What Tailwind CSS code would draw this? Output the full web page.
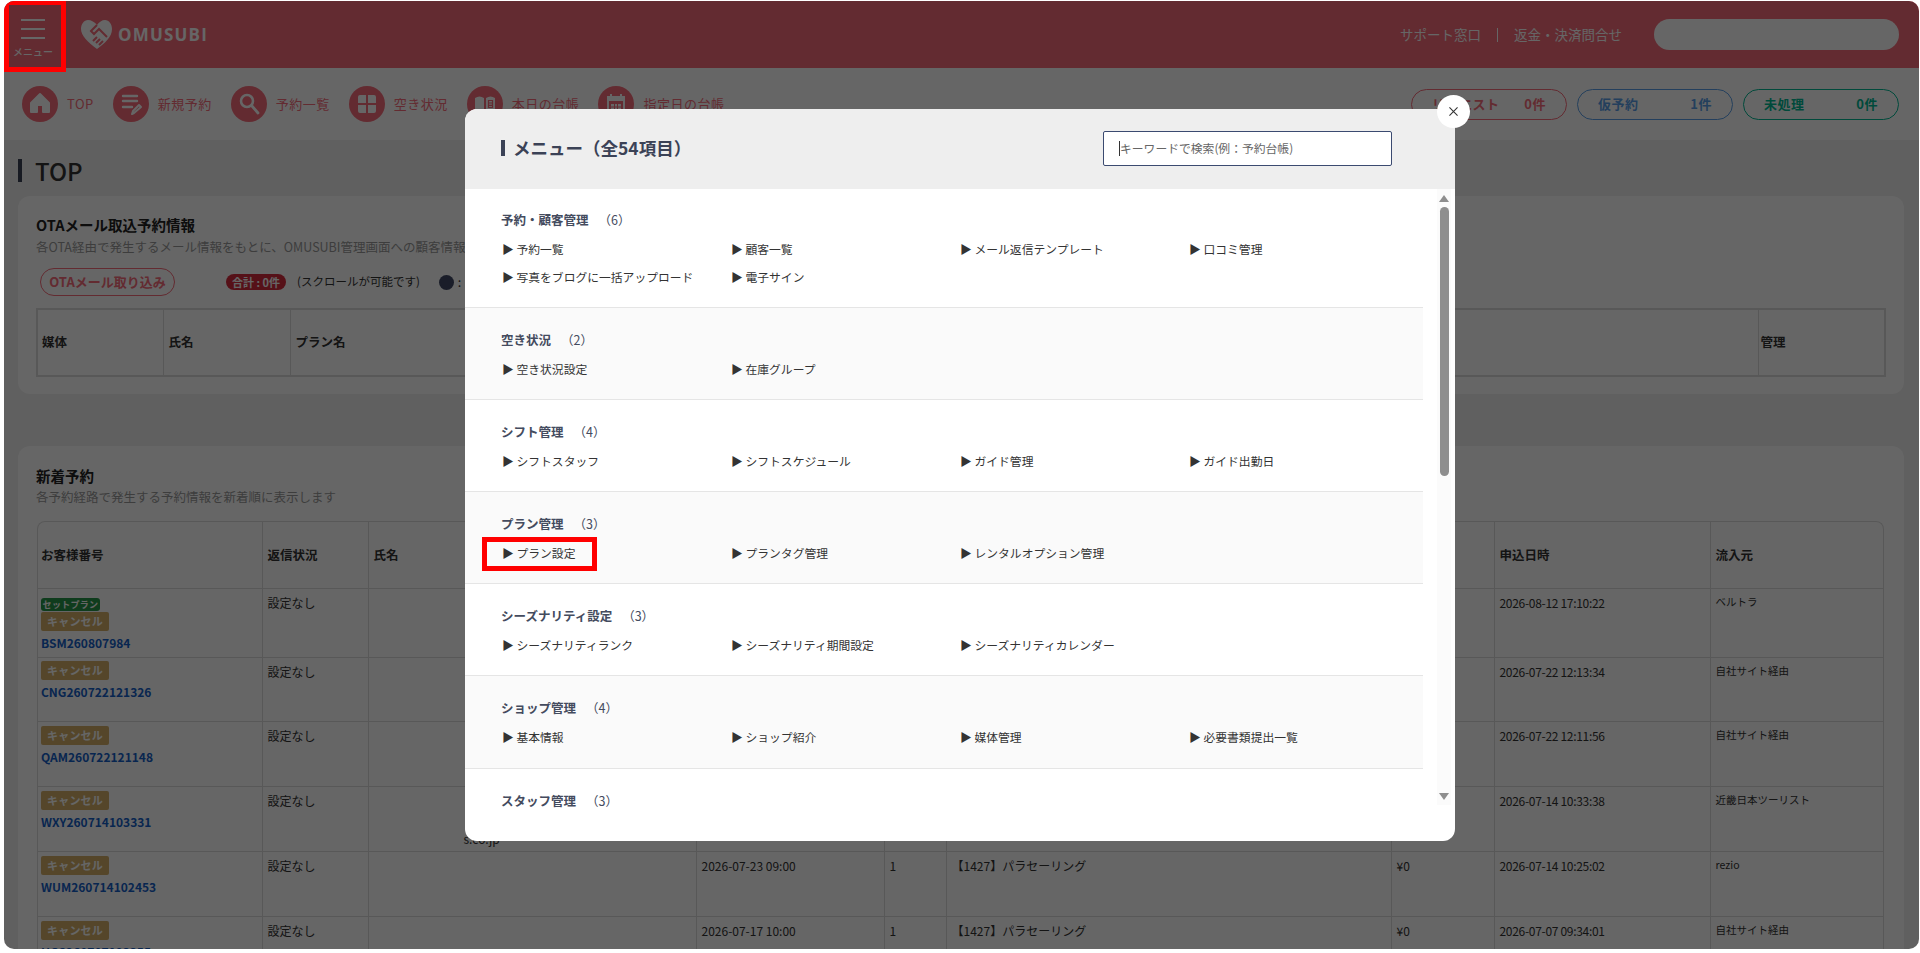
<!DOCTYPE html>
<html lang="ja">
<head>
  <meta charset="UTF-8" />
  <meta name="viewport" content="width=device-width, initial-scale=1" />
  <title>OMUSUBI メニュー</title>
  <script src="https://cdn.jsdelivr.net/npm/@tailwindcss/browser@4"></script>
</head>
<body class="bg-white font-['Noto_Sans_CJK_JP','Noto_Sans',sans-serif] text-[#333] h-[953px] overflow-hidden">
  <!-- Page frame -->
  <div class="relative mt-px ml-1 w-[1915px] h-[948px] rounded-[10px] overflow-hidden bg-[#f0f0f0]">

    <!-- Header -->
    <header class="h-[67px] bg-[#f76b7a] flex items-center">
      <div class="w-[58px] h-full flex flex-col items-center pt-[18px] text-white">
        <div class="w-6 flex flex-col gap-[7px]">
          <span class="block h-[2px] bg-white"></span>
          <span class="block h-[2px] bg-white"></span>
          <span class="block h-[2px] bg-white"></span>
        </div>
        <span class="mt-[6px] text-[10px] leading-[14px] font-medium whitespace-nowrap">メニュー</span>
      </div>
      <div class="ml-[19px] flex items-center">
        <svg viewBox="0 0 32 30" class="w-8 h-[30px] -mt-[2px]">
          <path fill="#fff" d="M7 1C3 1 0 5 0 10c0 7 7 13 16 20 8-6 15-12 15-20 0-5-3-9-7-9-3 0-6 2-8 5-2-3-6-5-9-5z" />
          <path fill="none" stroke="#f76b7a" stroke-width="2" d="M16 6l-6 6 3 3 5-5 8 8M13 15l-3-3M12 22l4-4M15 24l4-4M18 26l4-4" />
        </svg>
        <span class="ml-[5px] font-['Open_Sans',sans-serif] font-bold text-[17px] leading-none tracking-[1.2px] text-white">OMUSUBI</span>
      </div>
      <div class="ml-auto flex items-center text-[13.5px] text-white">
        <a>サポート窓口</a>
        <span class="mx-4 w-px h-[14px] bg-white"></span>
        <a>返金・決済問合せ</a>
        <div class="ml-[32px] mr-5 w-[245px] h-[31px] rounded-full bg-[#fff]"></div>
      </div>
    </header>

    <!-- Shortcut nav -->
    <nav class="h-[72px] bg-white flex items-center pl-[18px] pr-5 text-[#f76b7a]">
      <div class="flex items-center gap-[19px]">
        <a class="flex items-center gap-[9px]">
          <span class="w-9 h-9 rounded-full bg-[#f76b7a] block">
            <svg viewBox="0 0 36 36" class="w-9 h-9"><path fill="#fff" stroke="#fff" stroke-width="2" stroke-linejoin="round" d="M18 8l9 9v9h-6v-7h-6v7H9v-9z" /></svg>
          </span>
          <span class="text-[13px] tracking-[0.5px]">TOP</span>
        </a>
        <a class="flex items-center gap-[9px]">
          <span class="w-9 h-9 rounded-full bg-[#f76b7a] block">
            <svg viewBox="0 0 36 36" class="w-9 h-9"><path fill="none" stroke="#fff" stroke-width="2.4" stroke-linecap="round" d="M10 10h14M10 15h14M10 21h9" /><path fill="none" stroke="#fff" stroke-width="2" stroke-linejoin="round" d="M21 27l-2 1 1-3 6-6 2 2z" /></svg>
          </span>
          <span class="text-[13px] tracking-[0.5px]">新規予約</span>
        </a>
        <a class="flex items-center gap-[9px]">
          <span class="w-9 h-9 rounded-full bg-[#f76b7a] block">
            <svg viewBox="0 0 36 36" class="w-9 h-9"><circle cx="16" cy="15" r="6" fill="none" stroke="#fff" stroke-width="2.6" /><path stroke="#fff" stroke-width="2.8" stroke-linecap="round" d="M20.5 19.5L27 27" /></svg>
          </span>
          <span class="text-[13px] tracking-[0.5px]">予約一覧</span>
        </a>
        <a class="flex items-center gap-[9px]">
          <span class="w-9 h-9 rounded-full bg-[#f76b7a] block">
            <svg viewBox="0 0 36 36" class="w-9 h-9"><path fill="#fff" d="M11 9h6v8H9v-6a2 2 0 0 1 2-2zM19 9h6a2 2 0 0 1 2 2v6h-8zM9 19h8v8h-6a2 2 0 0 1-2-2zM19 19h8v6a2 2 0 0 1-2 2h-6z" /></svg>
          </span>
          <span class="text-[13px] tracking-[0.5px]">空き状況</span>
        </a>
        <a class="flex items-center gap-[9px]">
          <span class="w-9 h-9 rounded-full bg-[#f76b7a] block">
            <svg viewBox="0 0 36 36" class="w-9 h-9"><path fill="#fff" d="M8 12c3-2 6-2 9 0v15c-3-2-6-2-9 0zM19 12c3-2 6-2 9 0v15c-3-2-6-2-9 0z" /><path fill="none" stroke="#f76b7a" stroke-width="1.2" d="M21.5 14.5h4v7h-4zM21.5 17h4M21.5 19.3h4" /></svg>
          </span>
          <span class="text-[13px] tracking-[0.5px]">本日の台帳</span>
        </a>
        <a class="flex items-center gap-[9px]">
          <span class="w-9 h-9 rounded-full bg-[#f76b7a] block">
            <svg viewBox="0 0 36 36" class="w-9 h-9"><path fill="#fff" d="M9 10h3V8h2v2h8V8h2v2h3v18H9zM11 15v11h14V15z" /><path fill="#fff" d="M13 18h10v6H13z" /><path stroke="#f76b7a" d="M16.5 18v6M19.5 18v6M13 21h10" /></svg>
          </span>
          <span class="text-[13px] tracking-[0.5px]">指定日の台帳</span>
        </a>
      </div>
      <div class="ml-auto flex gap-[10px] text-[13px] font-bold tracking-[0.5px]">
        <a class="w-[156px] h-[31px] rounded-full border border-[#f76b7a] flex items-center justify-between px-5 text-[#f76b7a]"><span>リクエスト</span><span>0件</span></a>
        <a class="w-[156px] h-[31px] rounded-full border border-[#5a9fe8] flex items-center justify-between px-5 text-[#5a9fe8]"><span>仮予約</span><span>1件</span></a>
        <a class="w-[156px] h-[31px] rounded-full border border-[#00b894] flex items-center justify-between px-5 text-[#00b894]"><span>未処理</span><span>0件</span></a>
      </div>
    </nav>

    <!-- Main -->
    <main class="px-[14px]">
      <div class="h-[56px] flex items-center">
        <h1 class="pl-[13px] border-l-4 border-[#3b4256] h-[23px] mt-[5px] flex items-center text-[24px] font-medium text-[#333]">TOP</h1>
      </div>

      <!-- OTA mail card -->
      <section class="w-[1886px] h-[198px] bg-white rounded-xl pt-[19px] pl-[18px]">
        <h2 class="text-[14.5px] leading-5 font-bold text-[#222]">OTAメール取込予約情報</h2>
        <p class="mt-[3px] text-[12.5px] leading-[18px] text-[#999] whitespace-nowrap">各OTA経由で発生するメール情報をもとに、OMUSUBI管理画面への顧客情報</p>
        <div class="mt-3 flex items-center h-7">
          <button class="ml-[4px] w-[135px] h-7 rounded-full border border-[#f76b7a] text-[13px] font-bold text-[#f76b7a]">OTAメール取り込み</button>
          <span class="ml-[51px] w-[60px] h-4 rounded-full bg-[#d62b3e] text-white text-[11px] leading-4 font-bold text-center">合計 : 0件</span>
          <span class="ml-[11px] text-[11.5px]">(スクロールが可能です)</span>
          <span class="ml-[19px] w-[15px] h-[15px] rounded-full bg-[#414a66]"></span>
          <span class="ml-1 text-[12.5px]">:</span>
        </div>
        <div class="mt-3 w-[1850px] border-2 border-[#ddd]">
          <table class="w-full table-fixed border-collapse">
            <colgroup><col class="w-[125px]" /><col class="w-[127px]" /><col /><col class="w-[126px]" /></colgroup>
            <tr class="h-[65px] text-[12.5px] text-left font-bold">
              <th class="pl-[4px] border-r border-[#ddd]">媒体</th>
              <th class="pl-[5px] border-r border-[#ddd]">氏名</th>
              <th class="pl-[5px] border-r border-[#ddd]">プラン名</th>
              <th class="pl-[2px]">管理</th>
            </tr>
          </table>
        </div>
      </section>

      <!-- New reservations card -->
      <section class="mt-[52px] w-[1886px] h-[600px] bg-white rounded-xl pt-5 pl-[18px]">
        <h2 class="text-[14.5px] leading-5 font-bold text-[#222]">新着予約</h2>
        <p class="mt-[2px] text-[12.5px] leading-[18px] text-[#999]">各予約経路で発生する予約情報を新着順に表示します</p>
        <div class="mt-[15px] ml-px w-[1847px] rounded-t-lg overflow-hidden border-t border-l border-r border-[#ddd]">
          <table class="w-full table-fixed border-collapse text-[12px] leading-[18px]">
            <colgroup>
              <col class="w-[224px]" /><col class="w-[106px]" /><col class="w-[328px]" /><col class="w-[188px]" /><col class="w-[62px]" /><col class="w-[445px]" /><col class="w-[103px]" /><col class="w-[216px]" /><col />
            </colgroup>
            <thead>
              <tr class="h-[66px] text-left font-bold text-[12.5px]">
                <th class="pl-[3px] border-r border-b border-[#ddd]">お客様番号</th>
                <th class="pl-[5px] border-r border-b border-[#ddd]">返信状況</th>
                <th class="pl-[5px] border-r border-b border-[#ddd]">氏名</th>
                <th class="border-r border-b border-[#ddd]"></th>
                <th class="border-r border-b border-[#ddd]"></th>
                <th class="border-r border-b border-[#ddd]"></th>
                <th class="border-r border-b border-[#ddd]"></th>
                <th class="pl-[5px] border-r border-b border-[#ddd]">申込日時</th>
                <th class="pl-[5px] border-b border-[#ddd]">流入元</th>
              </tr>
            </thead>
            <tbody class="align-top">
              <tr class="h-[69px]">
                <td class="pl-[3px] pt-[9px] border-r border-b border-[#ddd]">
                  <span class="block w-[59px] h-[13px] rounded-[3px] bg-[#27964a] text-white text-[9px] leading-[13px] font-bold text-center whitespace-nowrap tracking-[0.3px]">セットプラン</span>
                  <span class="block mt-px w-[68px] h-[19px] rounded-[2px] bg-[#d4b06a] text-white text-[11px] leading-[19px] font-bold text-center tracking-[0.2px]">キャンセル</span>
                  <a class="block mt-[3px] text-[12px] font-bold text-[#1560c8]">BSM260807984</a>
                </td>
                <td class="pl-[5px] pt-[5px] border-r border-b border-[#ddd]">設定なし</td>
                <td class="border-r border-b border-[#ddd]"></td>
                <td class="border-r border-b border-[#ddd]"></td>
                <td class="border-r border-b border-[#ddd]"></td>
                <td class="border-r border-b border-[#ddd]"></td>
                <td class="border-r border-b border-[#ddd]"></td>
                <td class="pl-[5px] pt-[5px] border-r border-b border-[#ddd] tracking-[-0.3px]">2026-08-12 17:10:22</td>
                <td class="pl-[5px] pt-[4px] border-b border-[#ddd] text-[10.5px]">ベルトラ</td>
              </tr>
              <tr class="h-[64px]">
                <td class="pl-[3px] pt-[3px] border-r border-b border-[#ddd]">
                  <span class="block w-[68px] h-[19px] rounded-[2px] bg-[#d4b06a] text-white text-[11px] leading-[19px] font-bold text-center tracking-[0.2px]">キャンセル</span>
                  <a class="block mt-[3px] text-[12px] font-bold text-[#1560c8]">CNG260722121326</a>
                </td>
                <td class="pl-[5px] pt-[5px] border-r border-b border-[#ddd]">設定なし</td>
                <td class="border-r border-b border-[#ddd]"></td>
                <td class="border-r border-b border-[#ddd]"></td>
                <td class="border-r border-b border-[#ddd]"></td>
                <td class="border-r border-b border-[#ddd]"></td>
                <td class="border-r border-b border-[#ddd]"></td>
                <td class="pl-[5px] pt-[5px] border-r border-b border-[#ddd] tracking-[-0.3px]">2026-07-22 12:13:34</td>
                <td class="pl-[5px] pt-[4px] border-b border-[#ddd] text-[10.5px]">自社サイト経由</td>
              </tr>
              <tr class="h-[65px]">
                <td class="pl-[3px] pt-[4px] border-r border-b border-[#ddd]">
                  <span class="block w-[68px] h-[19px] rounded-[2px] bg-[#d4b06a] text-white text-[11px] leading-[19px] font-bold text-center tracking-[0.2px]">キャンセル</span>
                  <a class="block mt-[3px] text-[12px] font-bold text-[#1560c8]">QAM260722121148</a>
                </td>
                <td class="pl-[5px] pt-[5px] border-r border-b border-[#ddd]">設定なし</td>
                <td class="border-r border-b border-[#ddd]"></td>
                <td class="border-r border-b border-[#ddd]"></td>
                <td class="border-r border-b border-[#ddd]"></td>
                <td class="border-r border-b border-[#ddd]"></td>
                <td class="border-r border-b border-[#ddd]"></td>
                <td class="pl-[5px] pt-[5px] border-r border-b border-[#ddd] tracking-[-0.3px]">2026-07-22 12:11:56</td>
                <td class="pl-[5px] pt-[4px] border-b border-[#ddd] text-[10.5px]">自社サイト経由</td>
              </tr>
              <tr class="h-[65px]">
                <td class="pl-[3px] pt-[4px] border-r border-b border-[#ddd]">
                  <span class="block w-[68px] h-[19px] rounded-[2px] bg-[#d4b06a] text-white text-[11px] leading-[19px] font-bold text-center tracking-[0.2px]">キャンセル</span>
                  <a class="block mt-[3px] text-[12px] font-bold text-[#1560c8]">WXY260714103331</a>
                </td>
                <td class="pl-[5px] pt-[5px] border-r border-b border-[#ddd]">設定なし</td>
                <td class="pl-[95px] pt-[43px] border-r border-b border-[#ddd]">s.co.jp</td>
                <td class="border-r border-b border-[#ddd]"></td>
                <td class="border-r border-b border-[#ddd]"></td>
                <td class="border-r border-b border-[#ddd]"></td>
                <td class="border-r border-b border-[#ddd]"></td>
                <td class="pl-[5px] pt-[5px] border-r border-b border-[#ddd] tracking-[-0.3px]">2026-07-14 10:33:38</td>
                <td class="pl-[5px] pt-[4px] border-b border-[#ddd] text-[10.5px]">近畿日本ツーリスト</td>
              </tr>
              <tr class="h-[65px]">
                <td class="pl-[3px] pt-[4px] border-r border-b border-[#ddd]">
                  <span class="block w-[68px] h-[19px] rounded-[2px] bg-[#d4b06a] text-white text-[11px] leading-[19px] font-bold text-center tracking-[0.2px]">キャンセル</span>
                  <a class="block mt-[3px] text-[12px] font-bold text-[#1560c8]">WUM260714102453</a>
                </td>
                <td class="pl-[5px] pt-[5px] border-r border-b border-[#ddd]">設定なし</td>
                <td class="border-r border-b border-[#ddd]"></td>
                <td class="pl-[5px] pt-[5px] border-r border-b border-[#ddd]">2026-07-23 09:00</td>
                <td class="pl-[5px] pt-[5px] border-r border-b border-[#ddd]">1</td>
                <td class="pl-[5px] pt-[5px] border-r border-b border-[#ddd]">【1427】パラセーリング</td>
                <td class="pl-[5px] pt-[5px] border-r border-b border-[#ddd]">¥0</td>
                <td class="pl-[5px] pt-[5px] border-r border-b border-[#ddd] tracking-[-0.3px]">2026-07-14 10:25:02</td>
                <td class="pl-[5px] pt-[4px] border-b border-[#ddd] text-[10.5px]">rezio</td>
              </tr>
              <tr class="h-[65px]">
                <td class="pl-[3px] pt-[4px] border-r border-b border-[#ddd]">
                  <span class="block w-[68px] h-[19px] rounded-[2px] bg-[#d4b06a] text-white text-[11px] leading-[19px] font-bold text-center tracking-[0.2px]">キャンセル</span>
                  <a class="block mt-[3px] text-[12px] font-bold text-[#1560c8]">UGS260707093355</a>
                </td>
                <td class="pl-[5px] pt-[5px] border-r border-b border-[#ddd]">設定なし</td>
                <td class="border-r border-b border-[#ddd]"></td>
                <td class="pl-[5px] pt-[5px] border-r border-b border-[#ddd]">2026-07-17 10:00</td>
                <td class="pl-[5px] pt-[5px] border-r border-b border-[#ddd]">1</td>
                <td class="pl-[5px] pt-[5px] border-r border-b border-[#ddd]">【1427】パラセーリング</td>
                <td class="pl-[5px] pt-[5px] border-r border-b border-[#ddd]">¥0</td>
                <td class="pl-[5px] pt-[5px] border-r border-b border-[#ddd] tracking-[-0.3px]">2026-07-07 09:34:01</td>
                <td class="pl-[5px] pt-[4px] border-b border-[#ddd] text-[10.5px]">自社サイト経由</td>
              </tr>
            </tbody>
          </table>
        </div>
      </section>
    </main>

    <!-- Dim overlay -->
    <div class="absolute inset-0 bg-black/60"></div>

    <!-- Red highlight on the menu button -->
    <div class="absolute left-0 -top-px w-[62px] h-[72px] border-[5px] border-[#ff0000]"></div>

    <!-- Menu modal -->
    <div class="absolute left-[461px] top-[108px] w-[990px] h-[732px] bg-white rounded-xl">
      <div class="h-[80px] rounded-t-xl bg-[#eeeeee] flex items-center pl-[36px]">
        <h2 class="pl-[8px] border-l-[4px] border-[#3b4256] h-4 flex items-center text-[17.5px] font-bold text-[#3b4256] -mt-[2px]">メニュー（全54項目）</h2>
        <div class="ml-auto mr-[63px] w-[289px] h-[35px] -mt-[2px] rounded-[2px] border border-[#3b4a70] bg-white flex items-center pl-[15px]">
          <span class="w-px h-[15px] bg-[#333]"></span>
          <span class="text-[11.8px] text-[#666]">キーワードで検索(例：予約台帳)</span>
        </div>
      </div>

      <div class="relative h-[616px]">
        <div class="w-[958px]">
          <section class="h-[119px] pt-[23px] pl-[36px] pr-[37px] border-b border-[#e5e5e5] bg-white">
            <h3 class="h-4 text-[12.5px] leading-4 font-bold text-[#444b5e]">予約・顧客管理<span class="ml-[10px] font-normal">（6）</span></h3>
            <ul class="mt-[10px] pl-px grid grid-cols-[229px_229px_229px_229px] gap-y-[6px] text-[11.8px] leading-[22px]">
              <li class="whitespace-nowrap">▶ 予約一覧</li>
              <li class="whitespace-nowrap">▶ 顧客一覧</li>
              <li class="whitespace-nowrap">▶ メール返信テンプレート</li>
              <li class="whitespace-nowrap">▶ 口コミ管理</li>
              <li class="whitespace-nowrap">▶ 写真をブログに一括アップロード</li>
              <li class="whitespace-nowrap">▶ 電子サイン</li>
            </ul>
          </section>
          <section class="h-[92px] pt-6 pl-[36px] pr-[37px] border-b border-[#e5e5e5] bg-[#fafafa]">
            <h3 class="h-4 text-[12.5px] leading-4 font-bold text-[#444b5e]">空き状況<span class="ml-[10px] font-normal">（2）</span></h3>
            <ul class="mt-[10px] pl-px grid grid-cols-[229px_229px_229px_229px] text-[11.8px] leading-[22px]">
              <li>▶ 空き状況設定</li>
              <li>▶ 在庫グループ</li>
            </ul>
          </section>
          <section class="h-[92px] pt-6 pl-[36px] pr-[37px] border-b border-[#e5e5e5] bg-white">
            <h3 class="h-4 text-[12.5px] leading-4 font-bold text-[#444b5e]">シフト管理<span class="ml-[10px] font-normal">（4）</span></h3>
            <ul class="mt-[10px] pl-px grid grid-cols-[229px_229px_229px_229px] text-[11.8px] leading-[22px]">
              <li>▶ シフトスタッフ</li>
              <li>▶ シフトスケジュール</li>
              <li>▶ ガイド管理</li>
              <li>▶ ガイド出勤日</li>
            </ul>
          </section>
          <section class="h-[92px] pt-6 pl-[36px] pr-[37px] border-b border-[#e5e5e5] bg-[#fafafa]">
            <h3 class="h-4 text-[12.5px] leading-4 font-bold text-[#444b5e]">プラン管理<span class="ml-[10px] font-normal">（3）</span></h3>
            <ul class="mt-[10px] pl-px grid grid-cols-[229px_229px_229px_229px] text-[11.8px] leading-[22px]">
              <li>▶ プラン設定</li>
              <li>▶ プランタグ管理</li>
              <li>▶ レンタルオプション管理</li>
            </ul>
          </section>
          <section class="h-[92px] pt-6 pl-[36px] pr-[37px] border-b border-[#e5e5e5] bg-white">
            <h3 class="h-4 text-[12.5px] leading-4 font-bold text-[#444b5e]">シーズナリティ設定<span class="ml-[10px] font-normal">（3）</span></h3>
            <ul class="mt-[10px] pl-px grid grid-cols-[229px_229px_229px_229px] text-[11.8px] leading-[22px]">
              <li>▶ シーズナリティランク</li>
              <li>▶ シーズナリティ期間設定</li>
              <li>▶ シーズナリティカレンダー</li>
            </ul>
          </section>
          <section class="h-[93px] pt-6 pl-[36px] pr-[37px] border-b border-[#e5e5e5] bg-[#fafafa]">
            <h3 class="h-4 text-[12.5px] leading-4 font-bold text-[#444b5e]">ショップ管理<span class="ml-[10px] font-normal">（4）</span></h3>
            <ul class="mt-[10px] pl-px grid grid-cols-[229px_229px_229px_229px] text-[11.8px] leading-[22px]">
              <li>▶ 基本情報</li>
              <li>▶ ショップ紹介</li>
              <li>▶ 媒体管理</li>
              <li>▶ 必要書類提出一覧</li>
            </ul>
          </section>
          <section class="pt-6 pl-[36px] pr-[37px] bg-white">
            <h3 class="h-4 text-[12.5px] leading-4 font-bold text-[#444b5e]">スタッフ管理<span class="ml-[10px] font-normal">（3）</span></h3>
          </section>
        </div>

        <!-- Scrollbar -->
        <div class="absolute left-[972px] top-0 w-[14px] h-full bg-[#fbfbfb] flex flex-col items-center pt-[6px]">
          <svg viewBox="0 0 10 7" class="w-[10px] h-[7px]"><path fill="#8e8e8e" d="M5 0l5 7H0z" /></svg>
          <div class="mt-[5px] w-[9px] h-[269px] rounded-full bg-[#8e8e8e]"></div>
          <svg viewBox="0 0 10 7" class="mt-auto mb-[5px] w-[10px] h-[7px]"><path fill="#8e8e8e" d="M5 7L0 0h10z" /></svg>
        </div>
      </div>

      <!-- Red highlight on プラン設定 -->
      <div class="absolute left-[17px] top-[428px] w-[115px] h-[34px] border-[5px] border-[#ff0000]"></div>

      <!-- Close button -->
      <button class="absolute left-[972px] -top-[14px] w-[33px] h-[33px] rounded-full bg-white flex items-center justify-center">
        <svg viewBox="0 0 10 10" class="w-[9px] h-[9px]"><path stroke="#333" stroke-width="1.2" d="M0.5 0.5l9 9M9.5 0.5l-9 9" /></svg>
      </button>
    </div>
  </div>
</body>
</html>
